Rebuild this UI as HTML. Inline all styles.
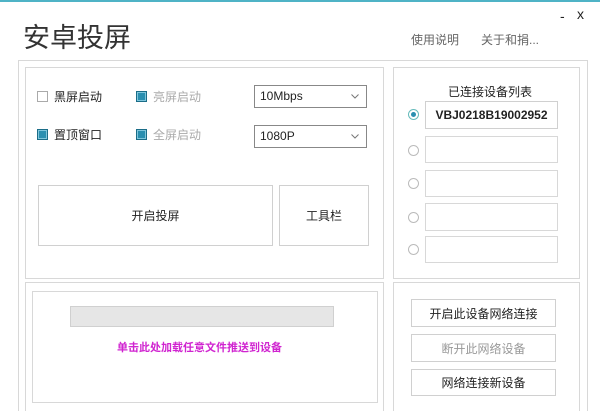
<!DOCTYPE html>
<html><head><meta charset="utf-8"><style>
*{margin:0;padding:0;box-sizing:border-box}
html,body{width:600px;height:411px;overflow:hidden}
body{background:#fff;position:relative;font-family:"Liberation Sans","Noto Sans CJK SC",sans-serif;color:#222}
.a{position:absolute}
.box{position:absolute;border:1px solid #d8d8d8}
.nb{border-bottom:none}
.t{position:absolute;font-size:12px;white-space:nowrap}
.cb{position:absolute;width:11px;height:11px;border:1px solid #aaa;background:#fff}
.cb.on{background:#2a8fb0;border-color:#1b6d88;box-shadow:inset 0 0 0 1px #7fc6dc}
.sel{position:absolute;border:1px solid #888;background:#fff;font-size:12px;padding:3px 0 0 5px}
.sel svg{position:absolute;right:7px;top:8px}
.btn{position:absolute;border:1px solid #d0d0d0;background:#fff;font-size:12px;display:flex;align-items:center;justify-content:center}
.rd{position:absolute;width:11px;height:11px;border:1px solid #bbb;border-radius:50%}
</style></head><body>
<div class="a" style="left:0;top:0;width:600px;height:2px;background:#4fb3c6"></div>
<div class="t" style="left:560px;top:8px;font-size:14px">-</div>
<div class="t" style="left:577px;top:6px;font-size:14px">x</div>
<div class="t" style="left:23px;top:16px;font-size:27px;color:#333">安卓投屏</div>
<div class="t" style="left:411px;top:31px;color:#666">使用说明</div>
<div class="t" style="left:481px;top:31px;color:#666">关于和捐...</div>
<div class="box nb" style="left:18px;top:60px;width:570px;height:351px"></div>
<div class="box" style="left:25px;top:67px;width:359px;height:212px"></div>
<div class="box nb" style="left:25px;top:282px;width:359px;height:129px"></div>
<div class="box" style="left:393px;top:67px;width:187px;height:212px"></div>
<div class="box nb" style="left:393px;top:282px;width:187px;height:129px"></div>

<div class="cb" style="left:37px;top:91px"></div><div class="t" style="left:54px;top:88px">黑屏启动</div>
<div class="cb on" style="left:136px;top:91px"></div><div class="t" style="left:153px;top:88px;color:#aaa">亮屏启动</div>
<div class="sel" style="left:254px;top:85px;width:113px;height:23px">10Mbps<svg width="8" height="5"><path d="M0.5 0.5L4 4L7.5 0.5" stroke="#777" fill="none"/></svg></div>
<div class="cb on" style="left:37px;top:129px"></div><div class="t" style="left:54px;top:126px">置顶窗口</div>
<div class="cb on" style="left:136px;top:129px"></div><div class="t" style="left:153px;top:126px;color:#aaa">全屏启动</div>
<div class="sel" style="left:254px;top:125px;width:113px;height:23px">1080P<svg width="8" height="5"><path d="M0.5 0.5L4 4L7.5 0.5" stroke="#777" fill="none"/></svg></div>
<div class="btn" style="left:38px;top:185px;width:235px;height:61px">开启投屏</div>
<div class="btn" style="left:279px;top:185px;width:90px;height:61px">工具栏</div>

<div class="t" style="left:448px;top:83px">已连接设备列表</div>
<div class="rd" style="left:408px;top:109px;border-color:#6bb"></div><div class="a" style="left:411px;top:112px;width:5px;height:5px;border-radius:50%;background:#2a8fb0"></div>
<div class="btn" style="left:425px;top:101px;width:133px;height:28px;font-weight:bold;font-size:12px">VBJ0218B19002952</div>
<div class="rd" style="left:408px;top:145px"></div><div class="box" style="left:425px;top:136px;width:133px;height:27px"></div>
<div class="rd" style="left:408px;top:178px"></div><div class="box" style="left:425px;top:170px;width:133px;height:27px"></div>
<div class="rd" style="left:408px;top:212px"></div><div class="box" style="left:425px;top:203px;width:133px;height:28px"></div>
<div class="rd" style="left:408px;top:244px"></div><div class="box" style="left:425px;top:236px;width:133px;height:27px"></div>

<div class="box" style="left:32px;top:291px;width:346px;height:112px"></div>
<div class="a" style="left:70px;top:306px;width:264px;height:21px;background:#e6e6e6;border:1px solid #d0d0d0"></div>
<div class="t" style="left:117px;top:339px;color:#d024d0;font-size:11px;font-weight:bold">单击此处加载任意文件推送到设备</div>

<div class="btn" style="left:411px;top:299px;width:145px;height:28px">开启此设备网络连接</div>
<div class="btn" style="left:411px;top:334px;width:145px;height:28px;color:#999">断开此网络设备</div>
<div class="btn" style="left:411px;top:369px;width:145px;height:27px">网络连接新设备</div>
</body></html>
